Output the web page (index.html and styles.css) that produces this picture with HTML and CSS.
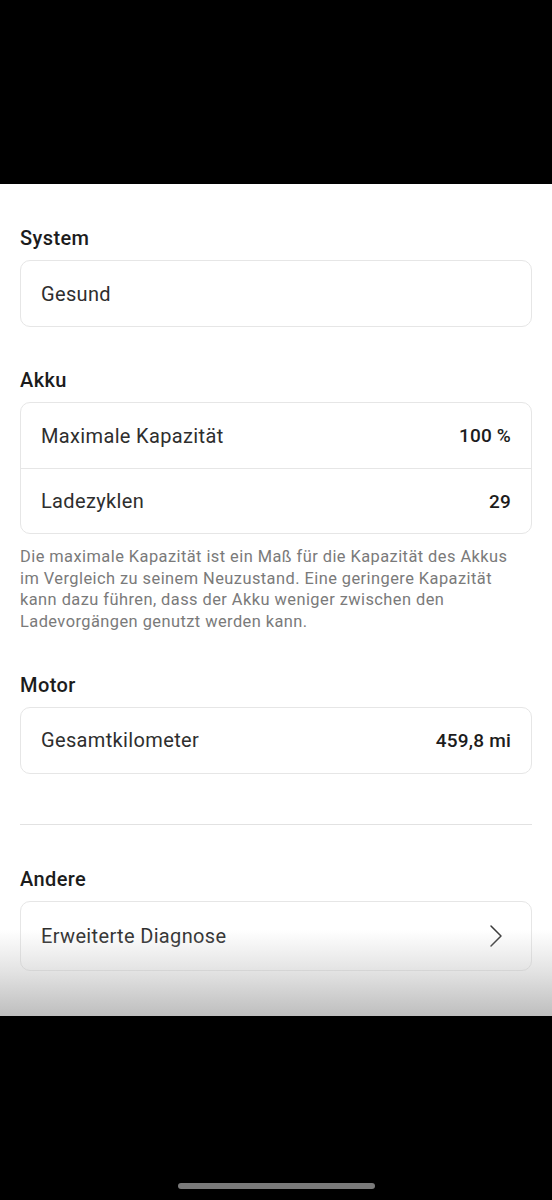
FILE: index.html
```html
<!DOCTYPE html>
<html lang="de">
<head>
<meta charset="utf-8">
<link rel="stylesheet" href="styles.css">
</head>
<body>
<div class="screen">
  <div class="top-bar"></div>
  <main class="content">
    <section class="section">
      <h2 class="section-title">System</h2>
      <div class="card">
        <div class="row"><span class="label">Gesund</span></div>
      </div>
    </section>

    <section class="section">
      <h2 class="section-title">Akku</h2>
      <div class="card">
        <div class="row"><span class="label">Maximale Kapazität</span><span class="value">100 %</span></div>
        <div class="row"><span class="label">Ladezyklen</span><span class="value">29</span></div>
      </div>
      <p class="note">Die maximale Kapazität ist ein Maß für die Kapazität des Akkus im Vergleich zu seinem Neuzustand. Eine geringere Kapazität kann dazu führen, dass der Akku weniger zwischen den Ladevorgängen genutzt werden kann.</p>
    </section>

    <section class="section">
      <h2 class="section-title">Motor</h2>
      <div class="card">
        <div class="row"><span class="label">Gesamtkilometer</span><span class="value">459,8 mi</span></div>
      </div>
    </section>

    <hr class="divider">

    <section class="section">
      <h2 class="section-title">Andere</h2>
      <div class="card">
        <div class="row row-tall"><span class="label">Erweiterte Diagnose</span>
          <svg class="chevron" width="14" height="24" viewBox="0 0 14 24"><path d="M2 2 L12 12 L2 22" fill="none" stroke="#3a3a3a" stroke-width="1.5" stroke-linecap="round" stroke-linejoin="round"/></svg>
        </div>
      </div>
    </section>
    <div class="fade"></div>
  </main>
  <div class="bottom-bar"><div class="home-indicator"></div></div>
</div>
</body>
</html>
```

FILE: styles.css
```css
* { box-sizing: border-box; }
html, body { margin: 0; padding: 0; background: #000; }
body { font-family: Roboto, "Noto Sans", sans-serif; }
.screen { width: 552px; height: 1200px; display: flex; flex-direction: column; background: #000; }
.top-bar { height: 184px; flex: none; }
.content {
  position: relative;
  height: 832px;
  flex: none;
  background: #fff;
  padding: 42px 20px 0 20px;
  overflow: hidden;
}
.section { margin-bottom: 41px; }
.section-title {
  margin: 0 0 10px 0;
  font-size: 20px;
  line-height: 24px;
  font-weight: 500;
  color: #1c1c1c;
  letter-spacing: 0.4px;
}
.card {
  border: 1px solid #e6e6e6;
  border-radius: 10px;
  background: #fff;
}
.row {
  height: 65px;
  display: flex;
  align-items: center;
  justify-content: space-between;
  padding: 0 20px;
}
.row + .row { border-top: 1px solid #e6e6e6; }
.row-tall { height: 68px; padding-right: 28px; }
.label { font-size: 20px; color: #2e2e2e; letter-spacing: 0.35px; }
.value { font-size: 19px; font-weight: 500; color: #1c1c1c; letter-spacing: 0.2px; }
.note {
  margin: 12px 0 0 0;
  padding-right: 12px;
  font-size: 16.4px;
  line-height: 21.7px;
  color: #7a7a7a;
  letter-spacing: 0.45px;
}
.section:has(.note) { margin-bottom: 40px; }
.divider {
  border: 0;
  border-top: 1px solid #e2e2e2;
  margin: 50px 0 42px 0;
}
.fade {
  position: absolute;
  left: 0; right: 0; bottom: 0;
  height: 86px;
  background: linear-gradient(to bottom, rgba(190,190,190,0) 0%, rgba(190,190,190,0.45) 50%, rgba(190,190,190,1) 100%);
  pointer-events: none;
}
.bottom-bar { flex: 1; position: relative; display: flex; justify-content: center; align-items: flex-end; padding-bottom: 11px; }
.home-indicator { width: 197px; height: 6px; border-radius: 3px; background: #7a7a7a; }
```
